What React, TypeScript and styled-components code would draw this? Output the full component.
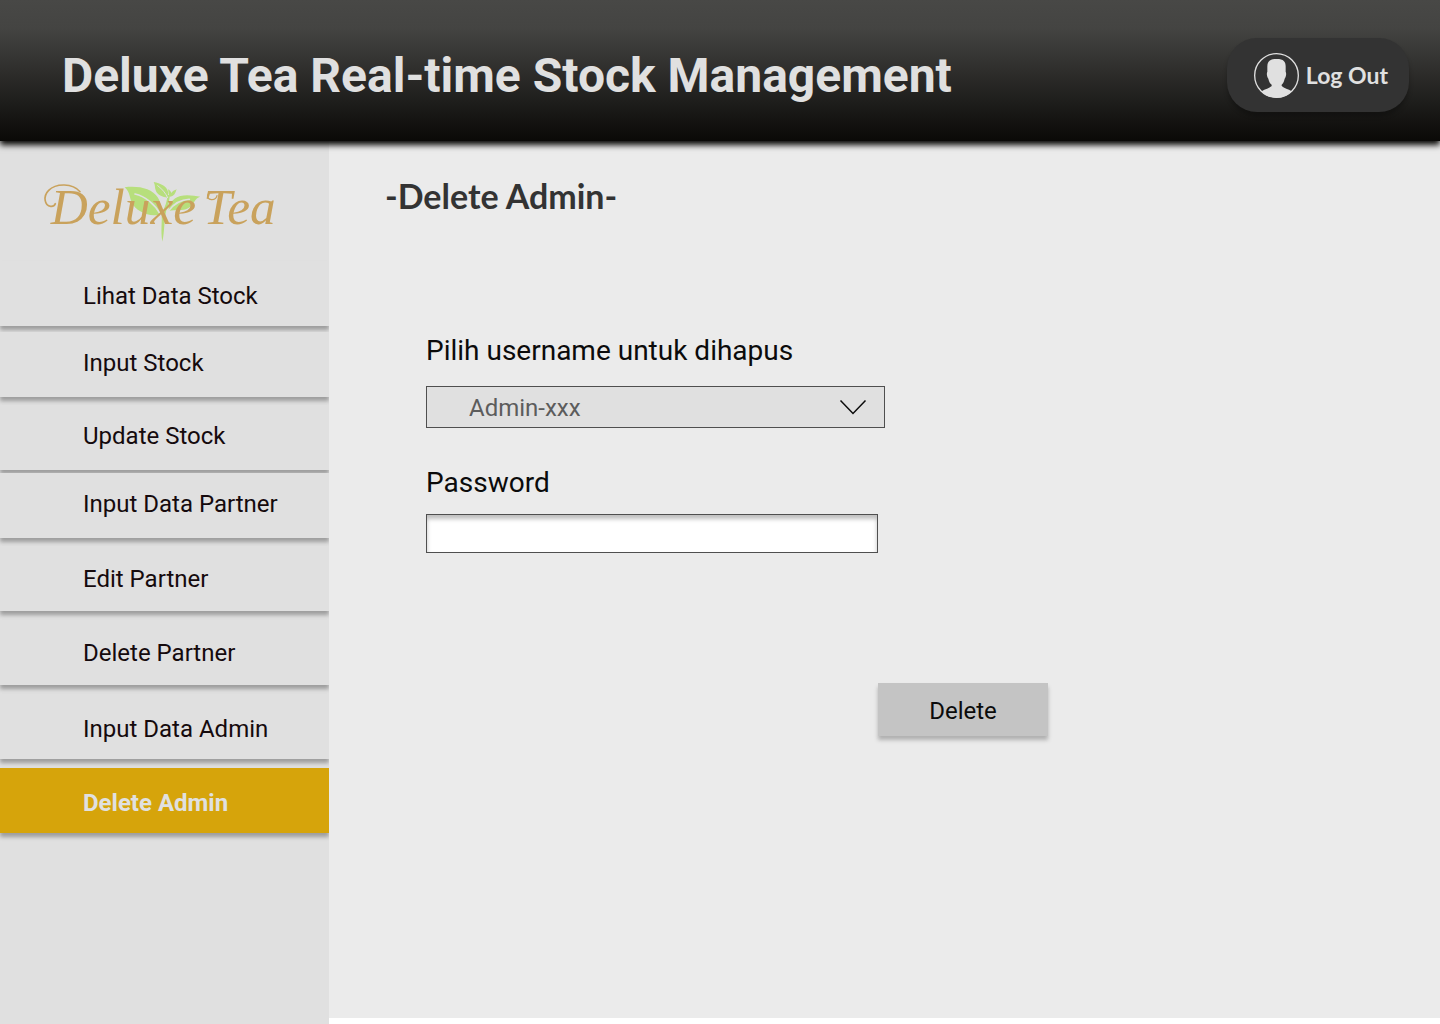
import React from "react";
import styled, { createGlobalStyle } from "styled-components";

const GlobalStyle = createGlobalStyle`
  *, *::before, *::after { box-sizing: border-box; }
  body {
    margin: 0;
    background: #ffffff;
    color: #0b0b0b;
    font-family: Roboto, "Liberation Sans", sans-serif;
  }
  button, input, select { font: inherit; color: inherit; border-radius: 0; }
`;

const humanist = `Lato, "Open Sans", sans-serif`;

const Page = styled.div`
  min-height: 100vh;
  display: flex;
  flex-direction: column;
`;

const Header = styled.header`
  position: relative;
  z-index: 1;
  display: flex;
  align-items: center;
  justify-content: space-between;
  padding: 38px 31px 29px 62px;
  background: linear-gradient(#484846 0%, #444442 20%, #0a0907 100%);
  box-shadow: 0 4px 6px #0a0907;
`;

const SiteTitle = styled.h1`
  margin: 0;
  padding-top: 2px;
  font-size: 48px;
  line-height: 56px;
  font-weight: 700;
  color: #e0e0e0;
`;

const LogOutButton = styled.button`
  display: flex;
  align-items: center;
  gap: 7px;
  height: 74px;
  padding: 0 21px 0 27px;
  border: 0;
  && { border-radius: 30px; }
  background: #333333;
  box-shadow: 0 4px 4px rgba(0, 0, 0, 0.25);
  color: #e0e0e0;
  font-family: ${humanist};
  font-size: 23px;
  font-weight: 700;
  white-space: nowrap;
  cursor: pointer;
`;

const Body = styled.div`
  flex: 1;
  display: flex;
`;

const Sidebar = styled.aside`
  flex: 0 0 329px;
  padding-top: 24px;
  background: #e0e0e0;
`;

const Brand = styled.div`
  height: 96px;
  padding-left: 30px;

  svg { display: block; }
`;

const NavList = styled.ul`
  margin: 0;
  padding: 0;
  list-style: none;
`;

const NavItem = styled.li<{ $gap: number }>`
  margin-top: ${(p) => p.$gap}px;
`;

const NavLink = styled.a<{ $active?: boolean; $rise: number }>`
  display: flex;
  align-items: flex-end;
  height: 65px;
  padding: 0 16px ${(p) => p.$rise}px 83px;
  background: ${(p) => (p.$active ? "#d6a40b" : "#e0e0e0")};
  box-shadow: 0 4px 4px rgba(0, 0, 0, 0.3);
  color: ${(p) => (p.$active ? "#e0e0e0" : "#150a0d")};
  font-size: 24px;
  line-height: 28px;
  font-weight: ${(p) => (p.$active ? 700 : 400)};
  text-decoration: none;
`;

const Main = styled.main`
  flex: 1;
  margin-bottom: 6px;
  padding: 31px 56px;
  background: #ebebeb;
`;

const PageTitle = styled.h2`
  margin: 0;
  color: #333333;
  font-family: ${humanist};
  font-size: 34px;
  line-height: 48px;
  font-weight: 700;
`;

const Form = styled.form`
  display: flex;
  flex-direction: column;
  max-width: 663px;
  padding: 115px 0 0 41px;
`;

const Label = styled.label`
  font-size: 28px;
  line-height: 32px;
`;

const SelectBox = styled.div`
  display: grid;
  align-items: center;
  width: 459px;
  margin: 19px 0 39px;

  > * { grid-area: 1 / 1; }
  > svg {
    justify-self: end;
    margin-right: 18px;
    pointer-events: none;
  }
`;

const Select = styled.select`
  width: 100%;
  height: 42px;
  padding: 2px 48px 0 42px;
  appearance: none;
  border: 1px solid #4f4f4f;
  background: #e0e0e0;
  font-size: 24px;
  && { color: #5c5c5c; }
`;

const PasswordInput = styled.input`
  width: 452px;
  height: 39px;
  margin-top: 15px;
  padding: 0 12px;
  border: 1px solid #4f4f4f;
  background: #ffffff;
  box-shadow: inset 0 4px 4px rgba(0, 0, 0, 0.25);
  font-size: 24px;
`;

const DeleteButton = styled.button`
  align-self: flex-end;
  width: 170px;
  height: 53px;
  margin-top: 130px;
  padding: 2px 0 0;
  border: 0;
  background: #c4c4c4;
  box-shadow: 0 4px 4px rgba(0, 0, 0, 0.25);
  font-size: 24px;
  cursor: pointer;
`;

const LogoText = styled.text`
  font-family: "Liberation Serif", serif;
  font-style: italic;
  font-size: 154px;
  fill: #c9a25c;
`;

function Logo() {
  return (
    <svg width="270" height="90" viewBox="0 0 810 270" role="img" aria-label="Deluxe Tea">
      <g fill="#b7df7c">
        <path d="M284 67C325 62 366 70 384 98C395 116 391 133 394 150C372 154 328 148 309 119C297 100 302 82 284 67Z" />
        <path d="M371 51C391 55 411 64 414 80C415 88 413 93 413 98C398 97 381 90 377 76C374 67 376 60 371 51Z" />
        <path d="M511 95C494 98 492 120 474 130C457 139 438 134 416 138C415 117 428 100 451 93C473 87 494 93 511 95Z" />
        <path d="M414 73C420 76 423 80 424 84C429 76 434 77 440 73C436 84 433 94 421 95C415 91 416 81 414 73Z" />
        <path d="M421 90C416 103 419 112 412 127C401 154 405 199 397 230C391 193 398 168 394 145C405 130 411 107 413 90Z" />
      </g>
      <g fill="none" stroke="#e0e0e0" strokeLinecap="round">
        <path d="M315 87C345 93 376 119 393 150" strokeWidth="5" />
        <path d="M383 62C397 72 406 84 413 98" strokeWidth="3" />
        <path d="M478 103C449 104 431 117 416 137" strokeWidth="5" />
      </g>
      <LogoText x="62" y="178">Deluxe</LogoText>
      <LogoText x="520" y="178">Tea</LogoText>
      <g fill="none" stroke="#c9a25c" strokeLinecap="round">
        <path d="M150 80C128 54 78 54 56 76C38 94 44 122 62 124C70 125 74 121 76 116" strokeWidth="5" />
        <path d="M552 80C530 80 526 102 544 104C554 105 560 98 561 92" strokeWidth="4" />
      </g>
    </svg>
  );
}

function UserIcon() {
  return (
    <svg width="45" height="45" viewBox="0 0 135 135" aria-hidden="true">
      <circle cx="67.5" cy="67.5" r="65.5" fill="none" stroke="#e0e0e0" strokeWidth="4" />
      <path
        fill="#e0e0e0"
        d="M40 40C40 26 47 18 68 18C89 18 95 26 95 40V56C98 62 96 72 92 77C90 86 87 91 83 95V99C90 106 103 108 113 115C103 128 86 134 67.500 134C49 134 32 128 23 115C33 108 46 106 53 99V95C48 91 45 86 43 77C39 72 37 62 40 56Z"
      />
    </svg>
  );
}

const menu = [
  { label: "Lihat Data Stock", gap: 0, rise: 16 },
  { label: "Input Stock", gap: 6, rise: 20 },
  { label: "Update Stock", gap: 8, rise: 20 },
  { label: "Input Data Partner", gap: 3, rise: 20 },
  { label: "Edit Partner", gap: 8, rise: 18 },
  { label: "Delete Partner", gap: 9, rise: 18 },
  { label: "Input Data Admin", gap: 9, rise: 16 },
  { label: "Delete Admin", gap: 9, rise: 16, active: true },
];

export default function App() {
  return (
    <Page>
      <GlobalStyle />
      <Header>
        <SiteTitle>Deluxe Tea Real-time Stock Management</SiteTitle>
        <LogOutButton type="button">
          <UserIcon />
          Log Out
        </LogOutButton>
      </Header>
      <Body>
        <Sidebar>
          <Brand>
            <Logo />
          </Brand>
          <nav>
            <NavList>
              {menu.map((item) => (
                <NavItem key={item.label} $gap={item.gap}>
                  <NavLink
                    href="#"
                    $active={item.active}
                    $rise={item.rise}
                    aria-current={item.active ? "page" : undefined}
                  >
                    {item.label}
                  </NavLink>
                </NavItem>
              ))}
            </NavList>
          </nav>
        </Sidebar>
        <Main>
          <PageTitle>-Delete Admin-</PageTitle>
          <Form onSubmit={(e) => e.preventDefault()}>
            <Label htmlFor="username">Pilih username untuk dihapus</Label>
            <SelectBox>
              <Select id="username" defaultValue="Admin-xxx">
                <option>Admin-xxx</option>
              </Select>
              <svg width="28" height="16" viewBox="0 0 28 16" fill="none" stroke="#0b0b0b" strokeWidth="1.500" aria-hidden="true">
                <path d="M1.500 1.500L14 14.500L26.500 1.500" />
              </svg>
            </SelectBox>
            <Label htmlFor="password">Password</Label>
            <PasswordInput id="password" type="password" />
            <DeleteButton type="submit">Delete</DeleteButton>
          </Form>
        </Main>
      </Body>
    </Page>
  );
}
